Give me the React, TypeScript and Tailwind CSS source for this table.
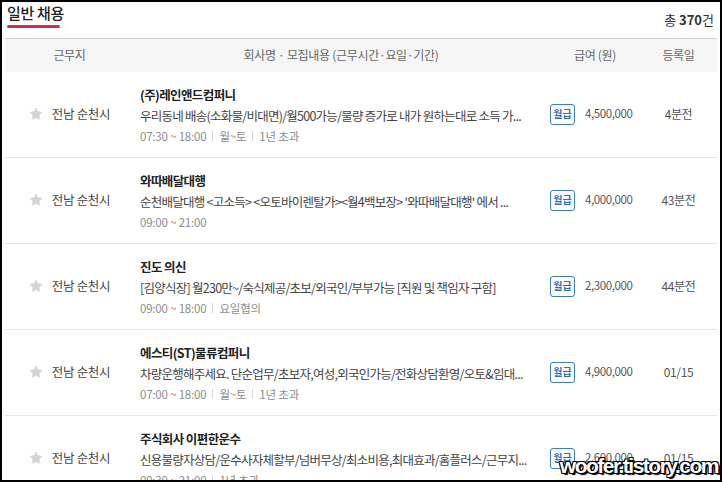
import { Star } from "lucide-react";

type Job = {
  company: string;
  desc: string;
  meta: string[];
  salary: string;
  date: string;
};

const jobs: Job[] = [
  {
    company: "(주)레인앤드컴퍼니",
    desc: "우리동네 배송(소화물/비대면)/월500가능/물량 증가로 내가 원하는대로 소득 가...",
    meta: ["07:30 ~ 18:00", "월~토", "1년 초과"],
    salary: "4,500,000",
    date: "4분전",
  },
  {
    company: "와따배달대행",
    desc: "순천배달대행 <고소득> <오토바이렌탈가><월4백보장> '와따배달대행' 에서 ...",
    meta: ["09:00 ~ 21:00"],
    salary: "4,000,000",
    date: "43분전",
  },
  {
    company: "진도 의신",
    desc: "[김양식장] 월230만~/숙식제공/초보/외국인/부부가능 [직원 및 책임자 구함]",
    meta: ["09:00 ~ 18:00", "요일협의"],
    salary: "2,300,000",
    date: "44분전",
  },
  {
    company: "에스티(ST)물류컴퍼니",
    desc: "차량운행해주세요. 단순업무/초보자,여성,외국인가능/전화상담환영/오토&임대...",
    meta: ["07:00 ~ 18:00", "월~토", "1년 초과"],
    salary: "4,900,000",
    date: "01/15",
  },
  {
    company: "주식회사 이편한운수",
    desc: "신용불량자상담/운수사자체할부/넘버무상/최소비용,최대효과/홈플러스/근무지...",
    meta: ["09:30 ~ 21:00", "1년 초과"],
    salary: "2,600,000",
    date: "01/15",
  },
];

const font = "font-['Noto_Sans_CJK_KR','Noto_Sans',sans-serif]";

const JobRow = ({ job }: { job: Job }) => (
  <div className="flex border-b border-[#e6e6e6]">
    <div className="flex w-[135px] shrink-0 items-center justify-center gap-[9px] pr-[6px]">
      <Star className="h-[14px] w-[14px] fill-[#d4d4d4] text-[#d4d4d4]" strokeWidth={1} />
      <span className="text-[12.5px] tracking-[-0.3px] text-[#444]">전남 순천시</span>
    </div>
    <div className="w-[402px] shrink-0 pt-[12px] pb-[10px]">
      <div className="h-[21px] overflow-hidden text-[12.5px] leading-[21px] font-bold tracking-[-0.6px] whitespace-nowrap text-[#222]">
        {job.company}
      </div>
      <div className="h-[21px] overflow-hidden text-[12.5px] leading-[21px] tracking-[-0.75px] whitespace-nowrap text-[#444]">
        {job.desc}
      </div>
      <div className="flex h-[21px] items-center text-[11.5px] leading-[21px] tracking-[-0.2px] text-[#8c8c8c]">
        {job.meta.map((m, i) => (
          <span key={i} className="flex items-center">
            {i > 0 && <span className="mx-[6px] h-[10px] w-px bg-[#d8d8d8]" />}
            {m}
          </span>
        ))}
      </div>
    </div>
    <div className="flex w-[106px] shrink-0 items-center gap-[10px] pl-[8px]">
      <span className="flex h-[21px] w-[25px] shrink-0 items-center justify-center rounded-[3px] border border-[#3b7cc4] text-[10px] leading-none font-bold text-[#2f6fb8]">
        월급
      </span>
      <span className="text-[11.5px] tracking-[-0.4px] text-[#555]">{job.salary}</span>
    </div>
    <div className="flex flex-1 items-center justify-center pr-[8px] text-[12px] tracking-[-0.4px] text-[#555]">
      {job.date}
    </div>
  </div>
);

export default function App() {
  return (
    <div
      className={`relative h-[482px] w-[722px] overflow-hidden border-2 border-black bg-white ${font}`}
    >
      <div className="flex items-start justify-between px-[5px] pt-[1px]">
        <div className="flex flex-col">
          <span className="text-[15px] leading-[20px] font-medium tracking-[-0.3px] text-[#222]">
            일반 채용
          </span>
          <span className="mt-[2px] h-[3px] w-[53px] rounded-full bg-[#c9304f]" />
        </div>
        <span className="mt-[7px] mr-[1px] text-[13px] text-[#333]">
          총 <b className="font-bold">370</b>건
        </span>
      </div>

      <div className="mx-[3px] mt-[8px]">
        <div className="flex h-[34px] items-center border-t border-[#cfcfcf] bg-[#f6f6f6] text-[12px] tracking-[-0.3px] text-[#666]">
          <div className="w-[135px] shrink-0 pr-[6px] text-center">근무지</div>
          <div className="w-[402px] shrink-0 text-center">
            회사명 · 모집내용 (근무시간·요일·기간)
          </div>
          <div className="w-[106px] shrink-0 text-center">급여 (원)</div>
          <div className="flex-1 pr-[8px] text-center">등록일</div>
        </div>
        {jobs.map((job, i) => (
          <JobRow key={i} job={job} />
        ))}
      </div>

      <div className="absolute right-[2px] bottom-[3px] font-['Liberation_Sans',sans-serif] text-[21px] leading-[22px] font-bold tracking-[-1.5px] text-white [text-shadow:-1px_-1px_0_#000,1px_-1px_0_#000,-1px_1px_0_#000,1px_1px_0_#000,2px_2px_1px_#000]">
        woofer.tistory.com
      </div>
    </div>
  );
}
